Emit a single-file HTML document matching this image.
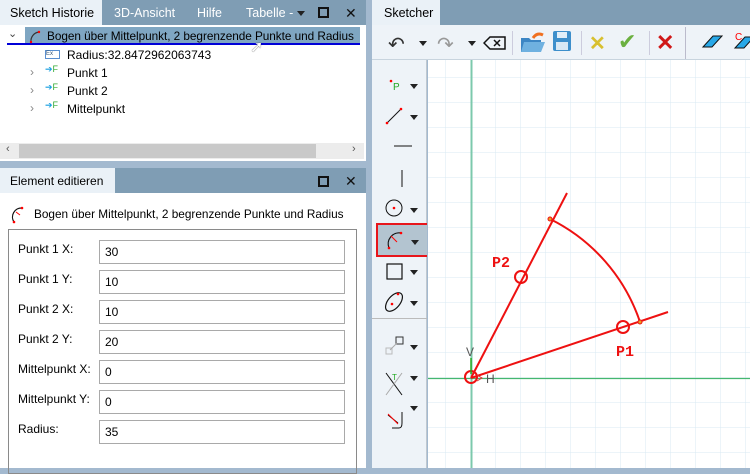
<!DOCTYPE html>
<html><head><meta charset="utf-8"><style>
*{margin:0;padding:0;box-sizing:border-box}
body{width:750px;height:468px;overflow:hidden;background:#a3b9cf;font-family:"Liberation Sans",sans-serif;font-size:12px;color:#000;position:relative}
.abs{position:absolute}
.tabbar{background:#7f9db4;height:25px}
.tab{position:absolute;top:0;height:25px;line-height:27px;color:#fff;font-size:12.5px}
.tab.act{background:#eaf1f7;color:#000;padding-left:10px}
.lbl{position:absolute;left:18px;font-size:12px}
.inp{position:absolute;left:99px;width:246px;height:24px;border:1px solid #a9a9a9;background:#fff;padding-left:5px;line-height:23px;font-size:12px}
.arr{width:0;height:0;border-left:4px solid transparent;border-right:4px solid transparent;border-top:5px solid #222;position:absolute}
</style></head><body>
<div class="abs" style="left:0;top:0;width:366px;height:161px;background:#fff">
 <div class="tabbar" style="position:relative">
  <div class="tab act" style="left:0;width:102px">Sketch Historie</div>
  <div class="tab" style="left:114px">3D-Ansicht</div>
  <div class="tab" style="left:197px">Hilfe</div>
  <div class="tab" style="left:246px">Tabelle -</div>
  <div class="arr" style="left:297px;top:11px"></div>
  <div class="abs" style="left:318px;top:7px;width:11px;height:11px;border:2px solid #111"></div>
  <div class="tab" style="left:345px;color:#111;font-size:14px">✕</div>
 </div>
 <div class="abs" style="left:25px;top:27px;width:335px;height:18px;background:#7fa6c2"></div>
 <div class="abs" style="left:7px;top:43px;width:353px;height:2px;background:#0000d8"></div>
 <div class="abs" style="left:8px;top:27px;font-size:11px;color:#444">⌄</div>
 <svg class="abs" style="left:27px;top:28px" width="16" height="16"><path d="M4 14 A9 9 0 0 1 12 4" fill="none" stroke="#333" stroke-width="1.2"/><circle cx="12" cy="4" r="1.2" fill="red"/><circle cx="4" cy="14" r="1.2" fill="red"/></svg>
 <div class="abs" style="left:47px;top:29px;font-size:11.8px;letter-spacing:-0.05px">Bogen über Mittelpunkt, 2 begrenzende Punkte und Radius</div>
 <div class="abs" style="left:45px;top:50px;width:15px;height:9px;border:1px solid #5a8fcf;font-size:6px;color:#357;line-height:7px">Ex</div>
 <div class="abs" style="left:67px;top:48px">Radius:32.8472962063743</div>
 <div class="abs" style="left:30px;top:65px;color:#888">›</div><div class="abs" style="left:45px;top:64px;font-size:9px;color:#1aa0e0">➔<span style="color:#3a3">F</span></div><div class="abs" style="left:67px;top:66px">Punkt 1</div>
 <div class="abs" style="left:30px;top:83px;color:#888">›</div><div class="abs" style="left:45px;top:82px;font-size:9px;color:#1aa0e0">➔<span style="color:#3a3">F</span></div><div class="abs" style="left:67px;top:84px">Punkt 2</div>
 <div class="abs" style="left:30px;top:101px;color:#888">›</div><div class="abs" style="left:45px;top:100px;font-size:9px;color:#1aa0e0">➔<span style="color:#3a3">F</span></div><div class="abs" style="left:67px;top:102px">Mittelpunkt</div>
 <div class="abs" style="left:0;top:143px;width:364px;height:16px;background:#ececec"></div>
 <div class="abs" style="left:19px;top:144px;width:297px;height:14px;background:#c9c9c9"></div>
 <div class="abs" style="left:6px;top:143px;font-size:11px;color:#555">‹</div>
 <div class="abs" style="left:352px;top:143px;font-size:11px;color:#555">›</div>
</div>
<div class="abs" style="left:0;top:168px;width:366px;height:300px;background:#fff">
 <div class="tabbar" style="position:relative;background:#7f9db4">
  <div class="tab act" style="left:0;width:115px;font-size:12px">Element editieren</div>
  <div class="abs" style="left:318px;top:8px;width:11px;height:11px;border:2px solid #111"></div>
  <div class="tab" style="left:345px;color:#111;font-size:14px">✕</div>
 </div>
 <svg class="abs" style="left:8px;top:36px" width="16" height="20"><path d="M6 18 A9 9 0 0 1 14 4" fill="none" stroke="#111" stroke-width="1.2"/><circle cx="14" cy="4" r="1.3" fill="red"/><circle cx="6" cy="18" r="1.3" fill="red"/><path d="M8 8 L12 11" stroke="red"/></svg>
 <div class="abs" style="left:34px;top:39px;font-size:11.8px">Bogen über Mittelpunkt, 2 begrenzende Punkte und Radius</div>
 <div class="abs" style="left:8px;top:61px;width:349px;height:245px;border:1px solid #8a8a8a"></div>
 <div class="lbl" style="top:74px">Punkt 1 X:</div><div class="inp" style="top:72px">30</div>
 <div class="lbl" style="top:104px">Punkt 1 Y:</div><div class="inp" style="top:102px">10</div>
 <div class="lbl" style="top:134px">Punkt 2 X:</div><div class="inp" style="top:132px">10</div>
 <div class="lbl" style="top:164px">Punkt 2 Y:</div><div class="inp" style="top:162px">20</div>
 <div class="lbl" style="top:194px">Mittelpunkt X:</div><div class="inp" style="top:192px">0</div>
 <div class="lbl" style="top:224px">Mittelpunkt Y:</div><div class="inp" style="top:222px">0</div>
 <div class="lbl" style="top:254px">Radius:</div><div class="inp" style="top:252px">35</div>
</div>
<div class="abs" style="left:372px;top:0;width:378px;height:25px;background:#7f9db4"></div>
<div class="abs" style="left:372px;top:0;width:68px;height:25px;background:#eaf1f7;padding-left:12px;line-height:27px;font-size:12.5px">Sketcher</div>
<div class="abs" style="left:372px;top:25px;width:378px;height:35px;background:#eef3f8;border-bottom:1px solid #c8d4de"></div>
<div class="abs" style="left:388px;top:32px;font-size:20px;color:#333">↶</div>
<div class="arr" style="left:419px;top:41px"></div>
<div class="abs" style="left:437px;top:32px;font-size:20px;color:#999">↷</div>
<div class="arr" style="left:468px;top:41px"></div>
<svg class="abs" style="left:483px;top:35px" width="24" height="16"><path d="M7 2 H22 V14 H7 L1 8 Z" fill="none" stroke="#111" stroke-width="1.5"/><path d="M11 5 L17 11 M17 5 L11 11" stroke="#111" stroke-width="1.5"/></svg>
<svg class="abs" style="left:519px;top:30px" width="28" height="24"><path d="M2 8 H10 L12 10 H22 V22 H2Z" fill="#3c86c4"/><path d="M5 12 H26 L22 22 H2Z" fill="#6fb1e0"/><path d="M14 8 Q18 2 24 5" stroke="#f07020" stroke-width="3" fill="none"/></svg>
<svg class="abs" style="left:552px;top:30px" width="20" height="22"><rect x="1" y="1" width="18" height="20" rx="2" fill="#3d8fcb"/><rect x="5" y="2" width="10" height="6" fill="#e0eef8"/><rect x="4" y="12" width="12" height="8" fill="#d8e8f4"/></svg>
<div class="abs" style="left:589px;top:31px;color:#d8c030;font-size:20px;font-weight:bold">✕</div>
<div class="abs" style="left:618px;top:29px;color:#6bb040;font-size:22px">✔</div>
<div class="abs" style="left:656px;top:30px;color:#d01818;font-size:22px;font-weight:bold">✕</div>
<svg class="abs" style="left:701px;top:33px" width="22" height="18"><path d="M2 14 L12 3 H21 L11 14 Z" fill="#28a8e8" stroke="#111"/><path d="M2 14 H11" stroke="#111"/></svg>
<svg class="abs" style="left:733px;top:30px" width="17" height="22"><text x="2" y="10" font-size="10" fill="red" font-family="Liberation Sans">C</text><path d="M2 18 L12 7 H21 L11 18 Z" fill="#28a8e8" stroke="#111"/></svg>
<div class="abs" style="left:512px;top:31px;width:1px;height:24px;background:#ccd"></div>
<div class="abs" style="left:581px;top:31px;width:1px;height:24px;background:#ccd"></div>
<div class="abs" style="left:649px;top:31px;width:1px;height:24px;background:#ccd"></div>
<div class="abs" style="left:685px;top:27px;width:1px;height:32px;background:#bbc"></div>
<div class="abs" style="left:372px;top:60px;width:55px;height:408px;background:#eef3f8;border-right:1px solid #c0c8d0"></div>
<div class="abs" style="left:372px;top:318px;width:55px;height:1px;background:#bbb"></div>
<svg class="abs" style="left:372px;top:60px" width="55" height="408">
 <circle cx="19" cy="21" r="1.3" fill="red"/><text x="21" y="30" font-size="10" fill="#2a2" font-family="Liberation Sans">P</text>
 <line x1="15" y1="63" x2="29" y2="49" stroke="#111"/><circle cx="15" cy="63" r="1.3" fill="red"/><circle cx="29" cy="49" r="1.3" fill="red"/>
 <line x1="22" y1="86" x2="40" y2="86" stroke="#111"/>
 <line x1="30" y1="110" x2="30" y2="127" stroke="#111"/>
 <circle cx="22" cy="148" r="8" fill="none" stroke="#111"/><circle cx="22" cy="148" r="1.3" fill="red"/>
 <rect x="5" y="164" width="52" height="32" fill="#b3c4d0" stroke="#e8151b" stroke-width="2"/>
 <path d="M17 188 A11 11 0 0 1 29 173" fill="none" stroke="#111" stroke-width="1.2"/><circle cx="29" cy="173" r="1.3" fill="red"/><circle cx="17" cy="188" r="1.3" fill="red"/><line x1="19" y1="176" x2="25" y2="182" stroke="red"/>
 <rect x="15" y="204" width="15" height="15" fill="none" stroke="#111" stroke-width="1.2"/>
 <ellipse cx="22" cy="242" rx="11" ry="6" transform="rotate(-50 22 242)" fill="none" stroke="#111" stroke-width="1.2"/><circle cx="26" cy="234" r="1.3" fill="red"/><circle cx="20" cy="244" r="1.3" fill="red"/>
 <rect x="24" y="277" width="7" height="7" fill="none" stroke="#333"/><rect x="14" y="288" width="6" height="6" fill="none" stroke="#bbb"/><line x1="18" y1="290" x2="25" y2="283" stroke="#aaa"/>
 <line x1="14" y1="313" x2="30" y2="335" stroke="#111"/><line x1="14" y1="335" x2="30" y2="313" stroke="#aaa"/><text x="20" y="320" font-size="8" fill="#2a2">T</text>
 <path d="M16 355 L26 363 M20 368 H27 Q30 368 30 363 V352" fill="none" stroke="#111"/><line x1="16" y1="354" x2="26" y2="364" stroke="red"/>
</svg>
<div class="arr" style="left:410px;top:84px"></div>
<div class="arr" style="left:410px;top:115px"></div>
<div class="arr" style="left:410px;top:208px"></div>
<div class="arr" style="left:411px;top:240px"></div>
<div class="arr" style="left:410px;top:270px"></div>
<div class="arr" style="left:410px;top:301px"></div>
<div class="arr" style="left:410px;top:345px"></div>
<div class="arr" style="left:410px;top:376px"></div>
<div class="arr" style="left:410px;top:406px"></div>
<svg class="abs" style="left:428px;top:60px" width="322" height="408">
 <defs><pattern id="g" x="-7" y="-7" width="25" height="25" patternUnits="userSpaceOnUse"><path d="M25 0 V25 M0 25 H25" stroke="#d8eaf3" stroke-width="1" fill="none"/></pattern></defs>
 <rect width="322" height="408" fill="#fff"/>
 <rect width="322" height="408" fill="url(#g)"/>
 <line x1="43.5" y1="0" x2="43.5" y2="408" stroke="#7cc9ac" stroke-width="2"/>
 <line x1="0" y1="318.5" x2="322" y2="318.5" stroke="#45b770" stroke-width="1.2"/>
 <g transform="translate(-428,-60)" stroke="#ee1111" fill="none" stroke-width="2">
  <line x1="471" y1="378" x2="668" y2="312"/>
  <line x1="471" y1="378" x2="567" y2="193"/>
  <path d="M550 219 A178 178 0 0 1 640 322"/>
  <circle cx="623" cy="327" r="6"/>
  <circle cx="521" cy="277" r="6"/>
  <circle cx="471" cy="377" r="6"/>
  <circle cx="550" cy="219" r="2" fill="#e8a020" stroke-width="1"/>
  <circle cx="640" cy="322" r="2" fill="#e8a020" stroke-width="1"/>
  <line x1="471" y1="374" x2="471" y2="358" stroke="#2a2" stroke-width="1.5"/>
  <path d="M477 375 L482 378 L477 381" stroke="#d33" stroke-width="1"/>
 </g>
 <text x="38" y="296" font-size="12" fill="#555" font-family="Liberation Sans">V</text>
 <text x="58" y="323" font-size="12" fill="#555" font-family="Liberation Sans">H</text>
 <text x="64" y="207" font-size="15" font-weight="bold" fill="#ee1111" font-family="Liberation Mono">P2</text>
 <text x="188" y="296" font-size="15" font-weight="bold" fill="#ee1111" font-family="Liberation Mono">P1</text>
</svg>
<div class="abs" style="left:250px;top:37px;font-size:16px;color:#fff;text-shadow:0 0 1px #000">➚</div>
</body></html>
